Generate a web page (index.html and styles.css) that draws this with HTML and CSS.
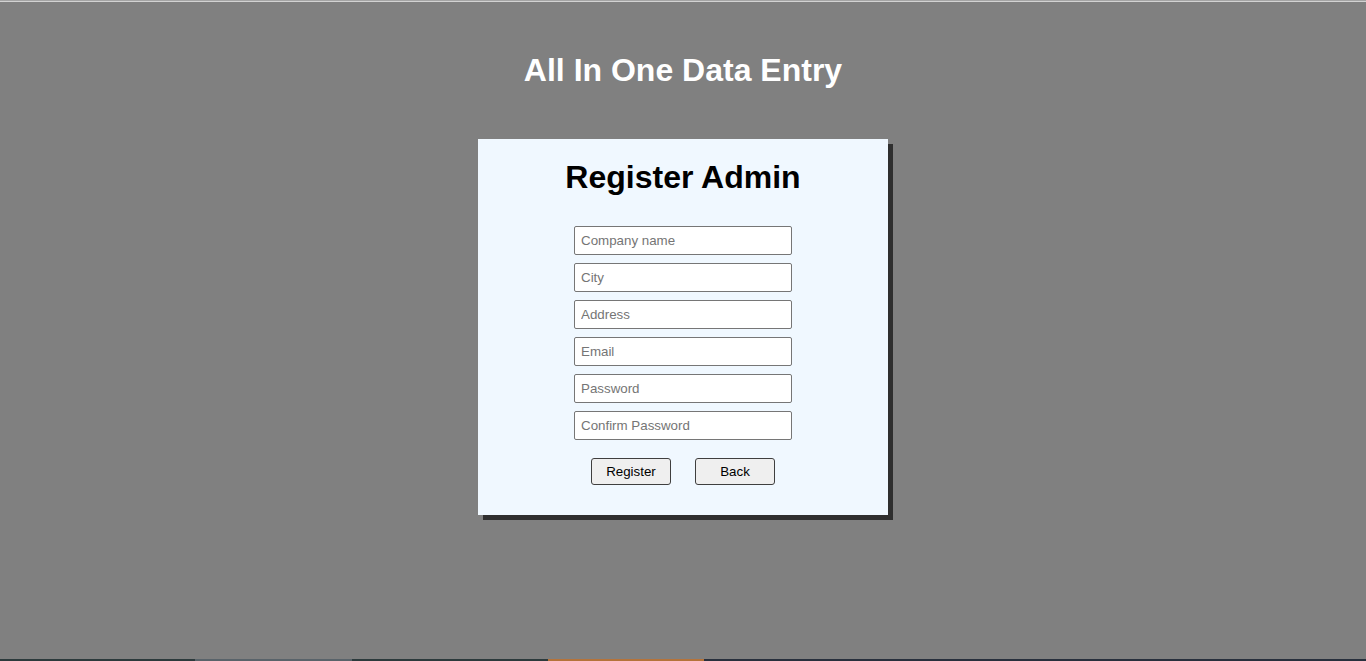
FILE: index.html
```
<!DOCTYPE html>
<html lang="en">
<head>
<meta charset="utf-8">
<title>All In One Data Entry</title>
<link rel="stylesheet" href="styles.css">
</head>
<body>
<div class="topline"></div>
<main class="page">
  <h1 class="site-title">All In One Data Entry</h1>
  <form class="card">
    <h1 class="card-title">Register Admin</h1>
    <div class="fields">
      <input class="field" type="text" placeholder="Company name">
      <input class="field" type="text" placeholder="City">
      <input class="field" type="text" placeholder="Address">
      <input class="field" type="email" placeholder="Email">
      <input class="field" type="password" placeholder="Password">
      <input class="field" type="password" placeholder="Confirm Password">
    </div>
    <div class="actions">
      <button class="btn" type="button">Register</button>
      <button class="btn" type="button">Back</button>
    </div>
  </form>
</main>
<div class="taskbar">
  <span class="seg seg-a"></span>
  <span class="seg seg-b"></span>
  <span class="seg seg-c"></span>
  <span class="seg seg-d"></span>
  <span class="seg seg-e"></span>
</div>
</body>
</html>
```
FILE: styles.css
```
html, body {
  margin: 0;
  padding: 0;
  height: 100%;
}
body {
  background: #808080;
  font-family: "Liberation Sans", Arial, sans-serif;
  display: flex;
  flex-direction: column;
  overflow: hidden;
}
.topline {
  height: 1px;
  background: #d2d2d2;
  border-top: 1px solid #a4a4a4;
  flex: none;
}
.page {
  flex: 1;
  display: flex;
  flex-direction: column;
  align-items: center;
}
.site-title {
  margin: 50px 0 50px;
  font-size: 32px;
  line-height: 37px;
  font-weight: bold;
  color: #ffffff;
}
.card {
  box-sizing: border-box;
  width: 410px;
  height: 376px;
  background: #f0f8ff;
  box-shadow: 5px 5px 0 #2f2f2f;
  padding: 20px 0 30px;
  display: flex;
  flex-direction: column;
  align-items: center;
}
.card-title {
  margin: 0 0 30px;
  font-size: 32px;
  line-height: 37px;
  font-weight: bold;
  color: #000000;
}
.fields {
  display: flex;
  flex-direction: column;
  gap: 8px;
}
.field {
  box-sizing: border-box;
  width: 218px;
  height: 29px;
  margin: 0;
  padding: 0 6px;
  border: 1px solid #767676;
  border-radius: 2px;
  background: #ffffff;
  font-family: "Liberation Sans", Arial, sans-serif;
  font-size: 13.333px;
  color: #000;
}
.field::placeholder {
  color: #757575;
}
.actions {
  margin-top: 18px;
  display: flex;
  gap: 24px;
}
.btn {
  box-sizing: border-box;
  width: 80px;
  height: 27px;
  margin: 0;
  padding: 0;
  border: 1px solid #3f3f3f;
  border-radius: 3px;
  background: #efefef;
  font-family: "Liberation Sans", Arial, sans-serif;
  font-size: 13.333px;
  color: #000;
}
.taskbar {
  flex: none;
  height: 2px;
  display: flex;
}
.seg { display: block; height: 100%; }
.seg-a { width: 195px; background: #2c3a3c; }
.seg-b { width: 157px; background: #59636a; }
.seg-c { width: 196px; background: #2c3a3c; }
.seg-d { width: 156px; background: #b5733a; }
.seg-e { flex: 1; background: #28303d; }
```
